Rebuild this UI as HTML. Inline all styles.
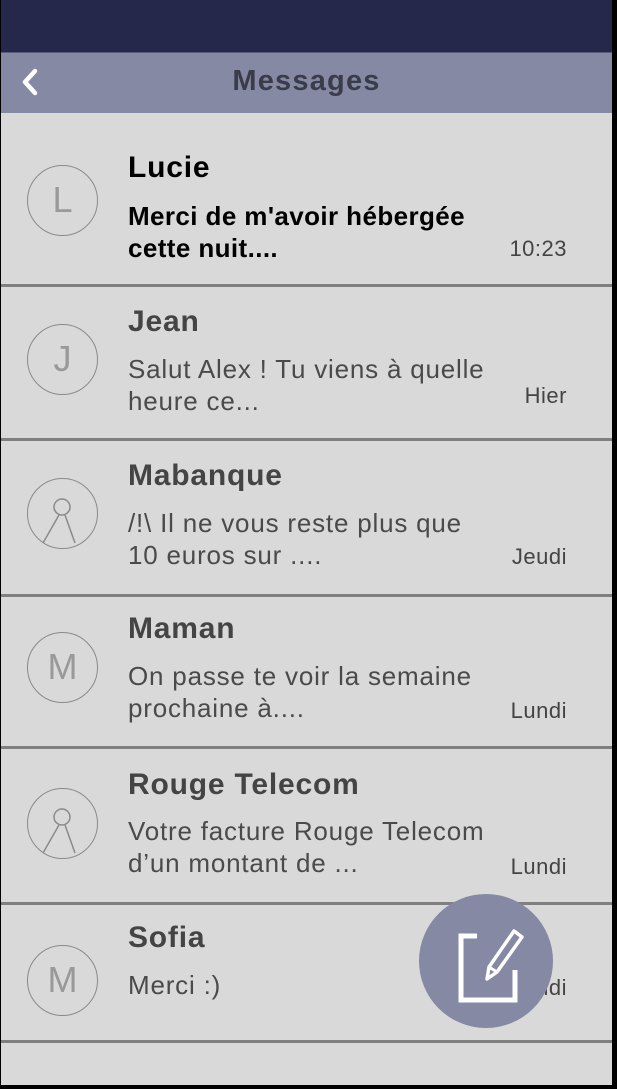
<!DOCTYPE html>
<html><head><meta charset="utf-8"><style>
*{margin:0;padding:0;box-sizing:border-box}
body{width:617px;height:1089px;background:#000;position:relative;overflow:hidden;font-family:"Liberation Sans","DejaVu Sans",sans-serif}
.screen{position:absolute;left:1px;top:0;width:611px;height:1085px;background:#d9d9d9;overflow:hidden}
.status{position:absolute;left:0;top:0;width:611px;height:52px;background:#25284a}
.hdr{position:absolute;left:0;top:52px;width:611px;height:61px;background:#8589a3;border-top:1px solid #5a5d7a}
.hdr .t{position:absolute;left:0;width:611px;top:12px;text-align:center;font-size:29px;font-weight:bold;color:#3a3c4a;letter-spacing:1.2px}
.sep{position:absolute;left:0;width:611px;height:3px;background:#7f7f7f}
.av{position:absolute;left:26px;width:71px;height:71px;border:1.5px solid #8a8a8a;border-radius:50%;text-align:center;font-size:36px;line-height:68px;color:#999}
.av svg{position:absolute;left:0;top:0}
.nm{position:absolute;left:127px;font-size:30px;font-weight:bold;color:#444;letter-spacing:0.8px}
.msg{position:absolute;left:127px;font-size:26px;line-height:32px;color:#4a4a4a;letter-spacing:0.8px}
.tm{position:absolute;right:45px;font-size:22px;color:#444;letter-spacing:0.5px}
.fab{position:absolute;left:418px;top:894px;width:134px;height:134px;border-radius:50%;background:#8589a3}
</style></head><body>
<div class="screen">
<div class="status"></div>
<div class="hdr">
<svg style="position:absolute;left:18px;top:14px" width="22" height="30" viewBox="0 0 22 30"><path d="M16 4 L6 15 L16 26" fill="none" stroke="#fff" stroke-width="4.5" stroke-linecap="round" stroke-linejoin="round"/></svg>
<div class="t">Messages</div></div>

<div class="av" style="top:165px">L</div>
<div class="nm" style="top:151px;color:#000">Lucie</div>
<div class="msg" style="top:200px;color:#000;font-weight:bold;letter-spacing:0.4px">Merci de m'avoir hébergée<br>cette nuit....</div>
<div class="tm" style="top:236px">10:23</div>
<div class="sep" style="top:284px"></div>

<div class="av" style="top:324px">J</div>
<div class="nm" style="top:305px">Jean</div>
<div class="msg" style="top:353px">Salut Alex ! Tu viens à quelle<br>heure ce...</div>
<div class="tm" style="top:383px">Hier</div>
<div class="sep" style="top:438px"></div>

<div class="av" style="top:478px"><svg width="68" height="68" viewBox="0 0 68 68"><circle cx="34" cy="28" r="8" fill="none" stroke="#8a8a8a" stroke-width="1.5"/><path d="M31 36 L15 64 M37 36 L47 64" stroke="#8a8a8a" stroke-width="1.5" fill="none"/></svg></div>
<div class="nm" style="top:459px">Mabanque</div>
<div class="msg" style="top:507px">/!\ Il ne vous reste plus que<br>10 euros sur ....</div>
<div class="tm" style="top:544px">Jeudi</div>
<div class="sep" style="top:594px"></div>

<div class="av" style="top:632px">M</div>
<div class="nm" style="top:612px">Maman</div>
<div class="msg" style="top:660px">On passe te voir la semaine<br>prochaine à....</div>
<div class="tm" style="top:698px">Lundi</div>
<div class="sep" style="top:746px"></div>

<div class="av" style="top:788px"><svg width="68" height="68" viewBox="0 0 68 68"><circle cx="34" cy="28" r="8" fill="none" stroke="#8a8a8a" stroke-width="1.5"/><path d="M31 36 L15 64 M37 36 L47 64" stroke="#8a8a8a" stroke-width="1.5" fill="none"/></svg></div>
<div class="nm" style="top:768px">Rouge Telecom</div>
<div class="msg" style="top:815px">Votre facture Rouge Telecom<br>d’un montant de ...</div>
<div class="tm" style="top:854px">Lundi</div>
<div class="sep" style="top:902px"></div>

<div class="av" style="top:945px">M</div>
<div class="nm" style="top:921px">Sofia</div>
<div class="msg" style="top:969px">Merci :)</div>
<div class="tm" style="top:975px">Lundi</div>
<div class="sep" style="top:1040px"></div>

<div class="fab"><svg width="134" height="134" viewBox="0 0 134 134"><path d="M58 42 H42 V106 H96 V76" fill="none" stroke="#fff" stroke-width="5"/><path d="M95 37 L103 43 L78 78 L68 85 L70 73 Z" fill="none" stroke="#fff" stroke-width="3.5" stroke-linejoin="round"/><path d="M70 73 L78 78" stroke="#fff" stroke-width="3"/></svg></div>
</div>
</body></html>
